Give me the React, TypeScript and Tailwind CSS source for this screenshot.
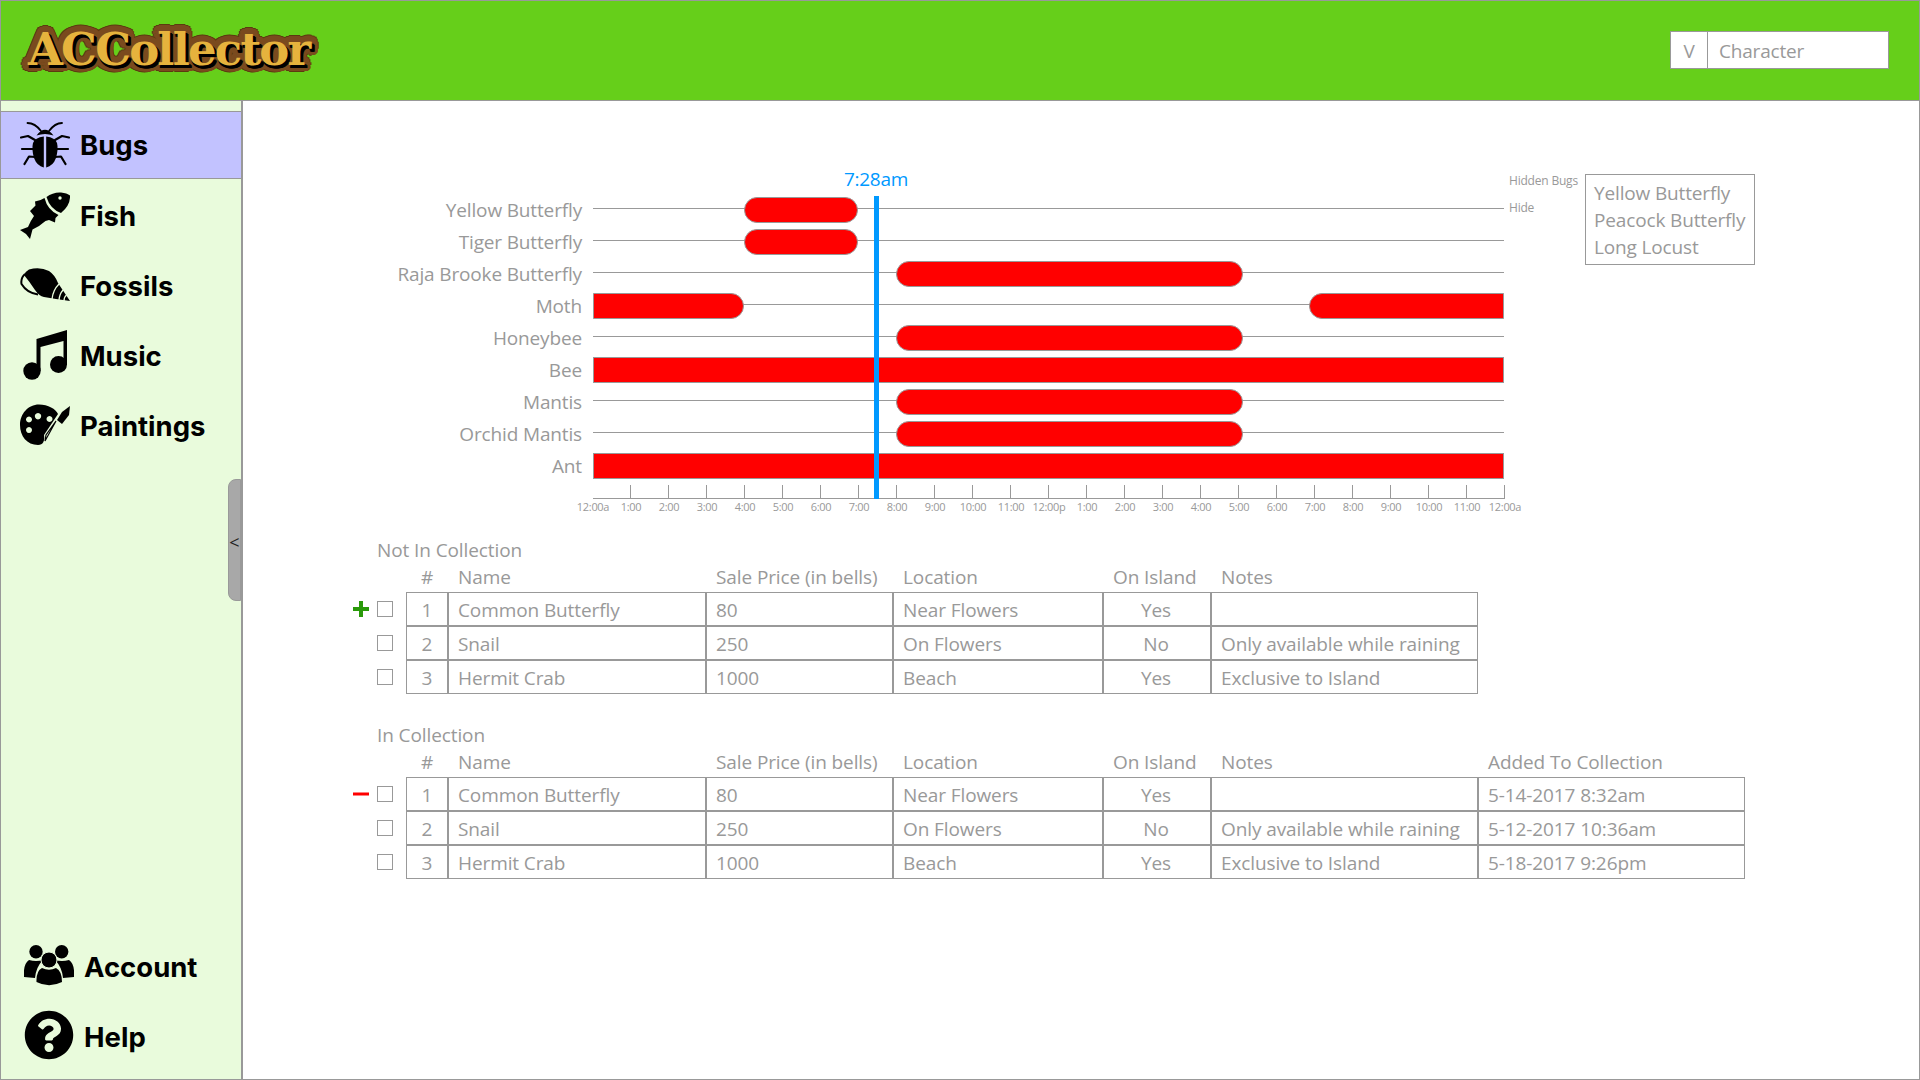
import React from "react";
import { FaQuestionCircle } from "react-icons/fa";

const BugIcon = () => (
  <svg width="50" height="46" viewBox="0 0 50 46">
    <g fill="none" stroke="#000" strokeLinecap="round" strokeLinejoin="round">
      <path strokeWidth="1.8" d="M7.5 1 Q15 1 21 9 M42 1 Q35 1 29 9" />
      <path strokeWidth="2.2" d="M15 18 L8 14 L1 15.5 M13 27 L2 27 M15 35 L9 34.5 L4.5 42" />
      <path strokeWidth="2.2" d="M35 18 L42 14 L49 15.5 M37 27 L48 27 M35 35 L41 34.5 L45.5 42" />
    </g>
    <path d="M16.5 13.5 Q25 2 33.5 13.5 Q25 10.5 16.5 13.5Z" />
    <path d="M23.8 14.5 L23.8 45.5 Q17 44 14 36 Q11.5 27 13 21 Q15 15.5 23.8 14.5Z" />
    <path d="M26.2 14.5 L26.2 45.5 Q33 44 36 36 Q38.5 27 37 21 Q35 15.5 26.2 14.5Z" />
  </svg>
);

const FishIcon = () => (
  <svg width="50" height="47" viewBox="0 0 50 47">
    <path d="M26.5 5 Q33 0 41 0.5 Q47 1 50 3.5 Q50.5 13 41 21 Q30 17 26.5 5Z" />
    <circle cx="40" cy="6" r="1.7" fill="#e9fbdc" />
    <path d="M24.5 6 Q27.5 18 38.5 23 L35.5 26 L35 30.5 L29 28 L25.5 29 Q20 34 12.5 37.5 L10 47 L6 42 L0 38 L8 35 Q11 28 14 24 L10 19 L15.5 13.5 L15 9.5 Q20 9 24.5 6Z" />
  </svg>
);

const ShellIcon = () => (
  <svg width="50" height="34" viewBox="0 0 50 34">
    <path d="M9 1.5 Q20 -1.5 29 3 Q35 7 38 15 L50 33 L36 31 L24 29 Q19 28 15 22 Q9 13 4 7 Q6 3 9 1.5Z" />
    <path fill="none" stroke="#000" strokeWidth="2" d="M5 6 Q0.5 10 1.5 16 Q7 25 18 26.5" />
    <path fill="none" stroke="#e9fbdc" strokeWidth="1.3" d="M32 31 Q33 22 39 16 M39 32 Q39.5 26 43 22 M44 33 Q44 29 46.5 27" />
  </svg>
);

const MusicIcon = () => (
  <svg width="44" height="50" viewBox="0 0 44 50">
    <circle cx="9" cy="41" r="8.7" />
    <circle cx="35.5" cy="34.5" r="8.5" />
    <path d="M13.5 9 L44 0 L44 35 L40.5 35 L40.5 11 L17.5 17 L17.5 41 L13.5 41Z" />
  </svg>
);

const PaletteIcon = () => (
  <svg width="50" height="42" viewBox="0 0 50 42">
    <path fillRule="evenodd" d="M19 0.5 C28 0.5 36 5 38 10 L24 31 C25 37 23 41 18 41 C7 41 0 32 0 21 C0 10 8 0.5 19 0.5Z M18 9 a3.2 3.2 0 1 0 0.01 0Z M29.5 12 a3 3 0 1 0 0.01 0Z M9 12.5 a3 3 0 1 0 0.01 0Z M9 23 a3 3 0 1 0 0.01 0Z" />
    <path fill="none" stroke="#000" strokeWidth="1.2" d="M36 17 L25 37 L26 31 L36 17" />
    <path d="M50 2 L49 11 L42 20 L37 16 L42 8Z" />
  </svg>
);

const AccountIcon = () => (
  <svg width="50" height="41" viewBox="0 0 50 41">
    <circle cx="12" cy="6.7" r="6.7" />
    <circle cx="37.7" cy="6.7" r="6.7" />
    <path d="M5 15 Q12 17 19 15 Q12 22 11 33 L0 32 Q-1 19 5 15Z" />
    <path d="M45 15 Q38 17 31 15 Q38 22 39 33 L50 32 Q51 19 45 15Z" />
    <circle cx="25" cy="15" r="8" stroke="#e9fbdc" strokeWidth="1" />
    <path d="M18 23 Q25 26.5 32 23 Q38 26 38 37 Q25 43.5 12.5 37 Q12 26 18 23Z" />
  </svg>
);

const navTop = [
  { label: "Bugs", icon: <BugIcon />, row: "h-[68px] bg-[#c2c2ff] border-y border-[#999]", text: "pt-[2px]" },
  { label: "Fish", icon: <FishIcon />, row: "h-[71px] pt-[1px]", text: "pt-[3px]" },
  { label: "Fossils", icon: <ShellIcon />, row: "h-[70px]", text: "pt-[4px]" },
  { label: "Music", icon: <MusicIcon />, row: "h-[70px]", text: "pt-[4px]" },
  { label: "Paintings", icon: <PaletteIcon />, row: "h-[70px]", text: "pt-[4px]" },
];

const navBottom = [
  { label: "Account", icon: <AccountIcon /> },
  { label: "Help", icon: <FaQuestionCircle size={50} color="#000" /> },
];

const chartRows: { name: string; bars: [number, number][] }[] = [
  { name: "Yellow Butterfly", bars: [[3.98, 6.97]] },
  { name: "Tiger Butterfly", bars: [[3.98, 6.97]] },
  { name: "Raja Brooke Butterfly", bars: [[7.99, 17.12]] },
  { name: "Moth", bars: [[0, 3.97], [18.85, 24]] },
  { name: "Honeybee", bars: [[7.99, 17.12]] },
  { name: "Bee", bars: [[0, 24]] },
  { name: "Mantis", bars: [[7.99, 17.12]] },
  { name: "Orchid Mantis", bars: [[7.99, 17.12]] },
  { name: "Ant", bars: [[0, 24]] },
];

const hourLabels = [
  "12:00a", "1:00", "2:00", "3:00", "4:00", "5:00", "6:00", "7:00", "8:00", "9:00", "10:00", "11:00",
  "12:00p", "1:00", "2:00", "3:00", "4:00", "5:00", "6:00", "7:00", "8:00", "9:00", "10:00", "11:00", "12:00a",
];

const Bar = ({ from, to }: { from: number; to: number }) => {
  const leftEdge = from === 0;
  const rightEdge = to === 24;
  const radius = `${leftEdge ? "rounded-l-none" : "rounded-l-[13px]"} ${rightEdge ? "rounded-r-none" : "rounded-r-[13px]"}`;
  return (
    <div
      className={`absolute top-0 h-[26px] bg-[#ff0000] border border-[#999] ${radius}`}
      style={{ left: `${(from / 24) * 100}%`, width: `${((to - from) / 24) * 100}%` }}
    />
  );
};

const Chart = () => (
  <div className="relative w-[1261px] shrink-0">
    <div className="absolute left-[598px] top-[-8px] w-[70px] text-center text-[19px] leading-[26px] tracking-[-0.3px] text-[#0099ff]">7:28am</div>
    <div className="pt-[23px]">
      {chartRows.map((r, i) => (
        <div key={r.name} className="flex h-[26px] mb-[6px]">
          <div className="w-[339px] shrink-0 text-right text-[19px] tracking-[-0.15px] leading-[26px] text-[#999]">{r.name}</div>
          <div className="relative ml-[11px] w-[911px]">
            <div className="absolute left-0 right-0 top-[11px] h-px bg-[#999]" />
            {r.bars.map((b, j) => (
              <Bar key={j} from={b[0]} to={b[1]} />
            ))}
            {i === 0 && <div className="absolute left-full ml-[5px] top-[3px] text-[12px] leading-[16px] tracking-[-0.2px] text-[#999]">Hide</div>}
          </div>
        </div>
      ))}
      <div className="ml-[350px] w-[912px] flex h-[14px] border-b border-[#999]">
        {Array.from({ length: 24 }).map((_, i) => (
          <div key={i} className="w-[38px] border-r border-[#999]" />
        ))}
      </div>
      <div className="ml-[331px] flex h-[16px]">
        {hourLabels.map((h, i) => (
          <div key={i} className="w-[38px] shrink-0 text-center whitespace-nowrap text-[11px] leading-[16px] text-[#999] tracking-[-0.3px]">{h}</div>
        ))}
      </div>
    </div>
    <div className="absolute left-[631px] top-[22px] h-[303px] w-[5px] bg-[#0099ff]" />
  </div>
);

const Side = () => (
  <div className="flex items-start ml-[5px]">
    <div className="w-[76px] text-[12px] leading-[14px] tracking-[-0.2px] text-[#999] whitespace-nowrap">Hidden Bugs</div>
    <div className="w-[170px] h-[91px] border border-[#999] pl-[8px] pt-[5px] text-[19px] tracking-[-0.15px] leading-[27px] text-[#999] whitespace-nowrap">
      <div>Yellow Butterfly</div>
      <div>Peacock Butterfly</div>
      <div>Long Locust</div>
    </div>
  </div>
);

const notIn = [
  ["1", "Common Butterfly", "80", "Near Flowers", "Yes", ""],
  ["2", "Snail", "250", "On Flowers", "No", "Only available while raining"],
  ["3", "Hermit Crab", "1000", "Beach", "Yes", "Exclusive to Island"],
];
const inColl = [
  ["1", "Common Butterfly", "80", "Near Flowers", "Yes", "", "5-14-2017 8:32am"],
  ["2", "Snail", "250", "On Flowers", "No", "Only available while raining", "5-12-2017 10:36am"],
  ["3", "Hermit Crab", "1000", "Beach", "Yes", "Exclusive to Island", "5-18-2017 9:26pm"],
];
const headers = ["#", "Name", "Sale Price (in bells)", "Location", "On Island", "Notes", "Added To Collection"];
const colW = ["w-[42px]", "w-[258px]", "w-[187px]", "w-[210px]", "w-[108px]", "w-[267px]", "w-[267px]"];
const bodyAlign = ["justify-center", "pl-[9px]", "pl-[9px]", "pl-[9px]", "justify-center pr-[2px]", "pl-[9px]", "pl-[9px]"];
const headAlign = ["justify-center", "pl-[10px]", "pl-[10px]", "pl-[10px]", "pl-[10px]", "pl-[10px]", "pl-[10px]"];

const Plus = () => (
  <svg width="18" height="18" viewBox="0 0 18 18" className="mt-[8px]">
    <rect x="7" y="1" width="4" height="16" fill="#2a9a0a" />
    <rect x="1" y="7" width="16" height="4" fill="#2a9a0a" />
  </svg>
);
const Minus = () => (
  <svg width="18" height="18" viewBox="0 0 18 18" className="mt-[8px]">
    <rect x="1" y="7.5" width="16" height="3" fill="#ff0000" />
  </svg>
);

const DataTable = ({ title, rows, sign, className }: { title: string; rows: string[][]; sign: React.ReactNode; className: string }) => (
  <section className={`ml-[109px] text-[19px] tracking-[-0.1px] text-[#999] ${className}`}>
    <div className="ml-[25px] h-[27px] leading-[25px]">{title}</div>
    <div className="flex h-[27px] pl-[54px] leading-[25px] whitespace-nowrap">
      {rows[0].map((_, c) => (
        <div key={c} className={`flex ${colW[c]} ${headAlign[c]}`}>{headers[c]}</div>
      ))}
    </div>
    {rows.map((row, r) => (
      <div key={r} className="flex h-[34px]">
        <div className="w-[18px] h-[34px]">{r === 0 ? sign : null}</div>
        <div className="ml-[7px] mt-[9px] w-[16px] h-[16px] border border-[#999] bg-white" />
        <div className="ml-[13px] flex">
          {row.map((cell, c) => (
            <div key={c} className={`flex items-center h-[34px] pt-[2px] border border-[#999] whitespace-nowrap ${colW[c]} ${bodyAlign[c]}`}>{cell}</div>
          ))}
        </div>
      </div>
    ))}
  </section>
);

const logoShadow =
  "[text-shadow:2px_3px_0_#000,1px_3px_0_#000,3px_3px_0_#000,2px_2px_0_#000,6px_0_0_#7a4a1e,-6px_0_0_#7a4a1e,0_6px_0_#7a4a1e,0_-6px_0_#7a4a1e,4px_4px_0_#7a4a1e,-4px_4px_0_#7a4a1e,4px_-4px_0_#7a4a1e,-4px_-4px_0_#7a4a1e,5px_3px_0_#7a4a1e,-5px_3px_0_#7a4a1e,5px_-3px_0_#7a4a1e,-5px_-3px_0_#7a4a1e,3px_5px_0_#7a4a1e,-3px_5px_0_#7a4a1e,3px_-5px_0_#7a4a1e,-3px_-5px_0_#7a4a1e,2px_6px_0_#7a4a1e,4px_6px_0_#7a4a1e,6px_4px_0_#7a4a1e,7px_0_0_#5c3a10,-7px_0_0_#5c3a10,0_7px_0_#5c3a10,0_-7px_0_#5c3a10,5px_5px_0_#5c3a10,-5px_5px_0_#5c3a10,5px_-5px_0_#5c3a10,-5px_-5px_0_#5c3a10,6px_3px_0_#5c3a10,-6px_3px_0_#5c3a10,6px_-3px_0_#5c3a10,-6px_-3px_0_#5c3a10,3px_6px_0_#5c3a10,-3px_6px_0_#5c3a10,3px_-6px_0_#5c3a10,-3px_-6px_0_#5c3a10]";

export default function App() {
  return (
    <div className="w-[1920px] h-[1080px] flex flex-col border border-[#999] bg-white overflow-hidden font-['Open_Sans',sans-serif]">
      <header className="h-[100px] shrink-0 flex items-center justify-between bg-[#66cf1a] border-b border-[#999]">
        <div className={`ml-[27px] -mt-[2px] font-['DejaVu_Serif',serif] font-bold text-[45px] leading-[60px] text-[#e6b33d] tracking-[-1.8px] ${logoShadow}`}>ACCollector</div>
        <div className="mr-[30px] -mt-[2px] flex h-[38px] w-[219px] bg-white border border-[#999] text-[19px] tracking-[-0.2px] text-[#999]">
          <div className="w-[37px] border-r border-[#999] flex items-center justify-center pt-[3px]">V</div>
          <div className="pl-[11px] flex items-center pt-[3px]">Character</div>
        </div>
      </header>
      <div className="flex flex-1 min-h-0">
        <aside className="relative w-[242px] shrink-0 bg-[#e9fbdc] border-r-2 border-[#999] pt-[10px] flex flex-col justify-between font-['Inter',sans-serif] font-bold text-[27.5px] text-black">
          <nav>
            {navTop.map((n) => (
              <div key={n.label} className={`flex items-center ${n.row}`}>
                <div className="flex justify-center w-[50px] ml-[19px]">{n.icon}</div>
                <div className={`ml-[10px] ${n.text}`}>{n.label}</div>
              </div>
            ))}
          </nav>
          <nav className="mb-[9px]">
            {navBottom.map((n) => (
              <div key={n.label} className="flex items-center h-[70px]">
                <div className="ml-[23px] w-[50px] flex justify-center">{n.icon}</div>
                <div className="ml-[10px] pt-[5px]">{n.label}</div>
              </div>
            ))}
          </nav>
          <div className="absolute right-0 top-[378px] w-[13px] h-[122px] bg-[#a8a8a8] rounded-l-[8px] border border-[#999] flex items-center justify-center pt-[4px] font-['Open_Sans',sans-serif] font-normal text-[18px] text-[#222]">&lt;</div>
        </aside>
        <main className="flex-1 min-w-0">
          <div className="flex items-start pt-[73px]">
            <Chart />
            <Side />
          </div>
          <DataTable title="Not In Collection" rows={notIn} sign={<Plus />} className="mt-[23px]" />
          <DataTable title="In Collection" rows={inColl} sign={<Minus />} className="mt-[29px]" />
        </main>
      </div>
    </div>
  );
}
